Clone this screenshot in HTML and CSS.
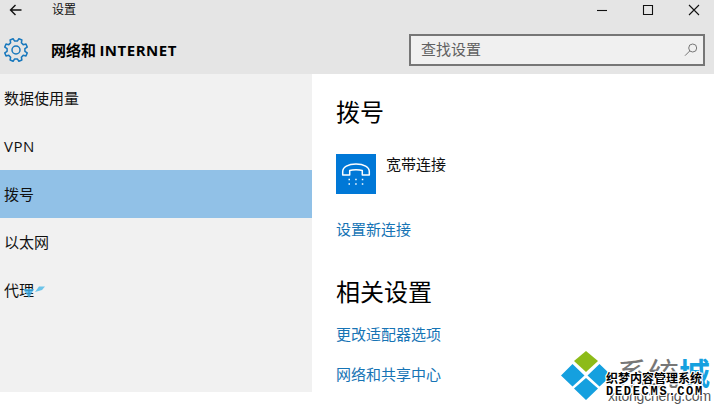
FILE: index.html
```html
<!DOCTYPE html>
<html lang="zh-CN">
<head>
<meta charset="utf-8">
<title>设置</title>
<link rel="stylesheet" href="styles.css">
</head>
<body>
<div class="window">
  <header class="header">
    <div class="titlebar">
      <svg class="back" width="14" height="14" viewBox="0 0 14 14"><path d="M12.5 7H1.5M6.5 2l-5 5 5 5"/></svg>
      <span class="title">设置</span>
      <div class="controls">
        <svg width="12" height="12" viewBox="0 0 12 12"><path d="M1 6.5h10"/></svg>
        <svg width="12" height="12" viewBox="0 0 12 12"><path d="M1.5 1.5h9v9h-9z"/></svg>
        <svg width="12" height="12" viewBox="0 0 12 12"><path d="M1 1l10 10M11 1L1 11"/></svg>
      </div>
    </div>
    <div class="heading">
      <svg class="gear" width="26" height="26" viewBox="-13 -13 26 26">
        <path d="M1.33-8.9L2.9-11.23 5.89-9.99 5.35-7.23 7.23-5.35 9.99-5.89 11.23-2.9 8.9-1.33V1.33L11.23 2.9 9.99 5.89 7.23 5.35 5.35 7.23 5.89 9.99 2.9 11.23 1.33 8.9H-1.33L-2.9 11.23-5.89 9.99-5.35 7.23-7.23 5.35-9.99 5.89-11.23 2.9-8.9 1.33V-1.33L-11.23-2.9-9.99-5.89-7.23-5.35-5.35-7.23-5.89-9.99-2.9-11.23-1.33-8.9z"/>
        <circle r="4"/>
      </svg>
      <h1 class="page-title">网络和 <span class="latin">INTERNET</span></h1>
      <div class="search">
        <span>查找设置</span>
        <svg width="14" height="14" viewBox="0 0 14 14"><circle cx="8.7" cy="5" r="4"/><path d="M5.8 7.9L1 12.7"/></svg>
      </div>
    </div>
  </header>
  <div class="body">
    <nav class="sidebar">
      <div class="item">数据使用量</div>
      <div class="item latin">VPN</div>
      <div class="item active">拨号</div>
      <div class="item">以太网</div>
      <div class="item proxy">代理
        <svg class="marks" width="26" height="16" viewBox="0 0 26 16"><path d="M3 6h11l-5 9z" fill="#3fb2ec" opacity=".8"/><path d="M15 9l4-5.500h6l-3 3.500z" fill="#6cc4ea"/></svg>
      </div>
    </nav>
    <main class="content">
      <h2 class="section-title">拨号</h2>
      <div class="connection">
        <svg class="phone" width="40" height="40" viewBox="0 0 40 40">
          <path d="M6.700 21v-3.500c0-4.500 5.300-7.500 13.300-7.500s13.300 3 13.300 7.500V21h-7v-4.500c-3-1-9.600-1-12.600 0V21z" fill="none" stroke="#fff" stroke-width="1.5" stroke-linejoin="round"/>
          <path d="M12.500 25.500h1.500M19.200 25.500h1.500M25.800 25.500h1.500M12.500 30h1.500M19.200 30h1.500M25.800 30h1.500" stroke="#fff" stroke-width="1.500"/>
        </svg>
        <span class="connection-name">宽带连接</span>
      </div>
      <a class="link new-link">设置新连接</a>
      <h2 class="section-title related">相关设置</h2>
      <a class="link adapter">更改适配器选项</a>
      <a class="link sharing">网络和共享中心</a>
    </main>
  </div>
  <div class="watermark">
    <svg class="logo" width="52" height="54" viewBox="0 0 52 54">
      <path d="M26 1l12 10-12 11-12-11z" fill="#8dbb18"/>
      <path d="M12.500 14l12 11.500-12 11L1 25.500zM39.500 14l12 11.500-12 11-12-11zM26 28l12 10.500-12 11.500-12-11.500z" fill="#15a0df"/>
    </svg>
    <div class="brand">系统<span>城</span></div>
    <div class="domain">xitongcheng.com</div>
    <div class="cms">织梦内容管理系统</div>
    <div class="cms-domain">DEDECMS.COM</div>
  </div>
</div>
</body>
</html>
```
FILE: styles.css
```css
* { box-sizing: border-box; }
body {
  margin: 0;
  background: #fff;
  color: #111;
  font: 15px/20px "Noto Sans CJK SC", sans-serif;
}
.latin { font-family: "Open Sans", sans-serif; }
.window { position: relative; width: 714px; height: 406px; overflow: hidden; }
.header { height: 74px; background: #e5e5e5; }
.titlebar { display: flex; align-items: center; height: 20px; padding: 0 14px 0 9px; }
.titlebar svg { fill: none; stroke: #111; stroke-width: 1.1; }
.titlebar .back { stroke-width: 1.4; }
.title { margin: -2px 0 0 29px; font-size: 12px; }
.controls { display: flex; gap: 34px; margin-left: auto; }
.heading { display: flex; align-items: center; height: 60px; padding: 0 9px 0 3px; }
.heading svg { fill: none; }
.gear { stroke: #1878bd; stroke-width: 1.5; stroke-linejoin: round; }
.page-title { margin: -1px 0 0 22px; font-size: 15px; line-height: 20px; font-weight: 700; color: #000; }
.page-title .latin { font-size: 15px; letter-spacing: 0.5px; }
.search {
  display: flex;
  align-items: center;
  justify-content: space-between;
  width: 296px;
  height: 32px;
  margin-left: auto;
  padding: 0 5px 0 10px;
  border: 2px solid #767676;
  background: #f0f0f0;
  color: #606060;
}
.search span { margin-top: -2px; }
.search svg { stroke: #777; stroke-width: 1; }
.body { display: flex; height: 318px; }
.sidebar { width: 312px; background: #f1f1f1; }
.item { height: 48px; padding-left: 4px; line-height: 48px; }
.item.latin { font-size: 15px; letter-spacing: 0.5px; }
.item.active { background: #91c1e7; }
.proxy { position: relative; }
.marks { position: absolute; left: 20px; top: 17px; }
.content { display: flex; flex-direction: column; align-items: flex-start; padding: 19px 0 0 24px; }
.section-title { margin: 0; font-size: 24px; line-height: 36px; font-weight: 400; color: #000; }
.connection { display: flex; gap: 10px; margin-top: 25px; }
.phone { background: #0078d7; }
.connection-name { line-height: 20px; }
.link { color: #1674b5; }
.new-link { margin-top: 25px; }
.related { margin-top: 34px; }
.adapter { margin-top: 15px; }
.sharing { margin-top: 20px; }
.watermark { position: absolute; left: 560px; top: 350px; width: 154px; height: 56px; white-space: nowrap; }
.watermark > * { position: absolute; }
.logo { left: 0; top: 0; }
.brand { left: 57px; top: 5px; font-size: 31px; line-height: 34px; color: #777; }
.brand span { color: #15a0df; font-weight: 700; }
.domain { left: 48px; top: 37px; font: 14px/18px "Liberation Sans", sans-serif; letter-spacing: -0.2px; color: #555; }
.cms, .cms-domain {
  color: #000;
  font-weight: 700;
  text-shadow: 1px 0 #fff, -1px 0 #fff, 0 1px #fff, 0 -1px #fff, 1px 1px #fff, -1px -1px #fff, 1px -1px #fff, -1px 1px #fff;
}
.cms { left: 46px; top: 20px; font-size: 12px; line-height: 16px; }
.cms-domain { left: 46px; top: 35px; font: 700 12px/14px "Liberation Mono", monospace; letter-spacing: 1.7px; }
```
